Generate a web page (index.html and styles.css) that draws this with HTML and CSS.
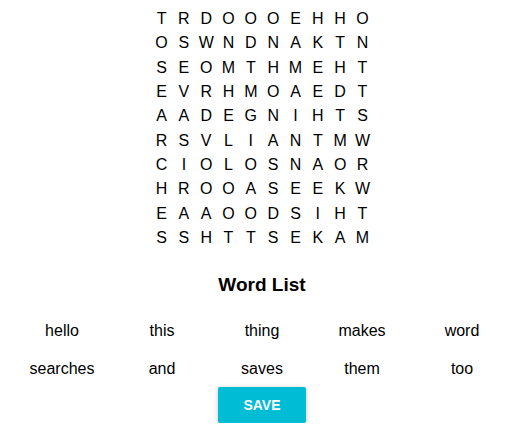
FILE: index.html
```html
<!DOCTYPE html>
<html>
<head>
<meta charset="utf-8">
<link rel="stylesheet" href="styles.css">
</head>
<body>
<div class="page">
  <div class="grid">
    <span>T</span><span>R</span><span>D</span><span>O</span><span>O</span><span>O</span><span>E</span><span>H</span><span>H</span><span>O</span>
    <span>O</span><span>S</span><span>W</span><span>N</span><span>D</span><span>N</span><span>A</span><span>K</span><span>T</span><span>N</span>
    <span>S</span><span>E</span><span>O</span><span>M</span><span>T</span><span>H</span><span>M</span><span>E</span><span>H</span><span>T</span>
    <span>E</span><span>V</span><span>R</span><span>H</span><span>M</span><span>O</span><span>A</span><span>E</span><span>D</span><span>T</span>
    <span>A</span><span>A</span><span>D</span><span>E</span><span>G</span><span>N</span><span>I</span><span>H</span><span>T</span><span>S</span>
    <span>R</span><span>S</span><span>V</span><span>L</span><span>I</span><span>A</span><span>N</span><span>T</span><span>M</span><span>W</span>
    <span>C</span><span>I</span><span>O</span><span>L</span><span>O</span><span>S</span><span>N</span><span>A</span><span>O</span><span>R</span>
    <span>H</span><span>R</span><span>O</span><span>O</span><span>A</span><span>S</span><span>E</span><span>E</span><span>K</span><span>W</span>
    <span>E</span><span>A</span><span>A</span><span>O</span><span>O</span><span>D</span><span>S</span><span>I</span><span>H</span><span>T</span>
    <span>S</span><span>S</span><span>H</span><span>T</span><span>T</span><span>S</span><span>E</span><span>K</span><span>A</span><span>M</span>
  </div>
  <h3 class="title">Word List</h3>
  <div class="words">
    <span>hello</span><span>this</span><span>thing</span><span>makes</span><span>word</span>
    <span>searches</span><span>and</span><span>saves</span><span>them</span><span>too</span>
  </div>
  <div class="actions">
    <button class="save">Save</button>
  </div>
</div>
</body>
</html>
```
FILE: styles.css
```css
html, body {
  margin: 0;
  padding: 0;
  background: #ffffff;
}

.page {
  width: 500px;
  margin-left: 12px;
  font-family: "Liberation Sans", Arial, Helvetica, sans-serif;
  color: #000;
}

.grid {
  display: grid;
  grid-template-columns: repeat(10, 22.33px);
  grid-auto-rows: 24.33px;
  justify-content: center;
  padding-top: 7px;
  font-size: 16px;
  line-height: 24.33px;
  text-align: center;
}

.title {
  margin: 24px 0 0;
  font-size: 19px;
  line-height: 22px;
  font-weight: bold;
  text-align: center;
}

.words {
  margin-top: 16px;
  display: grid;
  grid-template-columns: repeat(5, 100px);
  grid-auto-rows: 37.6px;
  font-size: 16px;
  line-height: 37.6px;
  text-align: center;
}

.actions {
  display: flex;
  justify-content: center;
}

.save {
  width: 88px;
  height: 36px;
  border: none;
  border-radius: 2px;
  background: #00bcd4;
  color: #fff;
  font-family: "Liberation Sans", Arial, Helvetica, sans-serif;
  font-size: 14px;
  font-weight: bold;
  text-transform: uppercase;
  padding: 0;
  box-shadow: 0 1px 6px rgba(0, 0, 0, 0.12), 0 1px 4px rgba(0, 0, 0, 0.12);
}
```
